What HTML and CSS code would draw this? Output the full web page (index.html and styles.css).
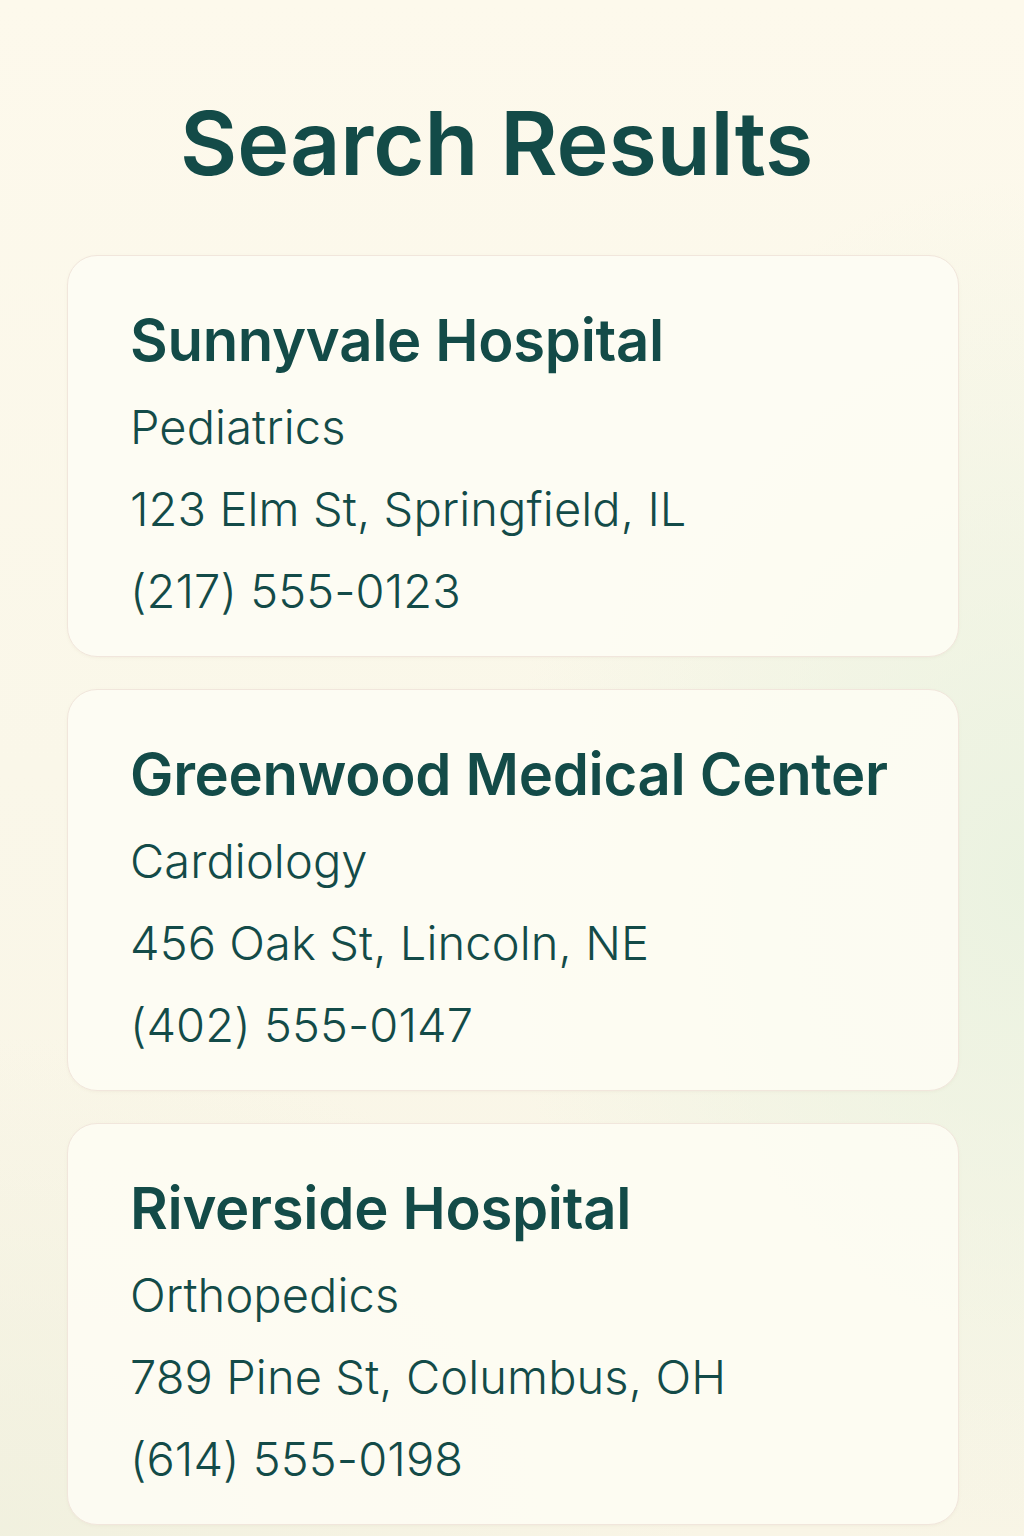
FILE: index.html
```html
<!DOCTYPE html>
<html lang="en">
<head>
<meta charset="utf-8">
<title>Search Results</title>
<link rel="stylesheet" href="styles.css">
</head>
<body>
<main class="page">
  <h1 class="page-title">Search Results</h1>
  <section class="results">
    <article class="card">
      <h2 class="card-title">Sunnyvale Hospital</h2>
      <p class="card-line">Pediatrics</p>
      <p class="card-line">123 Elm St, Springfield, IL</p>
      <p class="card-line">(217) 555-0123</p>
    </article>
    <article class="card">
      <h2 class="card-title">Greenwood Medical Center</h2>
      <p class="card-line">Cardiology</p>
      <p class="card-line">456 Oak St, Lincoln, NE</p>
      <p class="card-line">(402) 555-0147</p>
    </article>
    <article class="card">
      <h2 class="card-title">Riverside Hospital</h2>
      <p class="card-line">Orthopedics</p>
      <p class="card-line">789 Pine St, Columbus, OH</p>
      <p class="card-line">(614) 555-0198</p>
    </article>
  </section>
</main>
</body>
</html>
```
FILE: styles.css
```css
html, body {
  margin: 0;
  padding: 0;
}
body {
  min-height: 1536px;
  font-family: Inter, "Noto Sans", "Liberation Sans", sans-serif;
  color: #134b48;
  background:
    radial-gradient(ellipse 520px 700px at 1024px 880px, rgba(234, 242, 224, 0.95), rgba(234, 242, 224, 0) 100%),
    radial-gradient(ellipse 700px 500px at 0px 1536px, rgba(240, 240, 222, 0.9), rgba(240, 240, 222, 0) 100%),
    linear-gradient(180deg, #fdf9ec 0%, #faf7e9 50%, #f9f5e6 100%);
}
.page {
  padding: 0 65px 0 67px;
  box-sizing: border-box;
  width: 1024px;
}
.page-title {
  margin: 91px 0 58px 113px;
  font-size: 88px;
  line-height: 1.2;
  font-weight: 600;
  letter-spacing: -0.1px;
}
.results {
  display: flex;
  flex-direction: column;
  gap: 32px;
}
.card {
  background: rgba(253, 252, 243, 0.92);
  border: 1px solid #f1e6dc;
  border-radius: 30px;
  padding: 43px 62px 24px;
  box-shadow: 0 1px 3px rgba(200, 190, 160, 0.12);
}
.card-title {
  margin: 0 0 5px;
  font-size: 58px;
  line-height: 82px;
  font-weight: 600;
  letter-spacing: -0.3px;
  white-space: nowrap;
}
.card-line {
  margin: 0;
  font-size: 47px;
  line-height: 82px;
  font-weight: 350;
  letter-spacing: 0.1px;
}
```
